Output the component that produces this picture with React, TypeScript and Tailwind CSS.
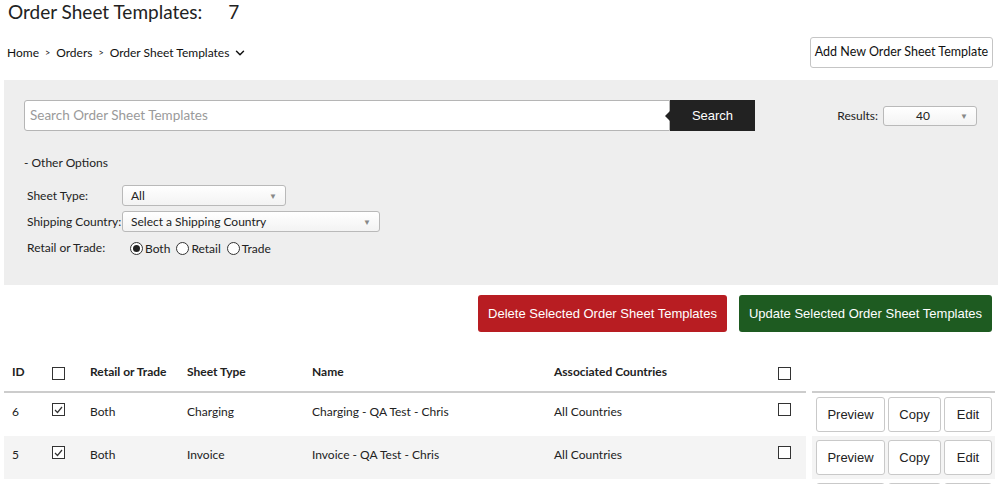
import React from "react";
import { ChevronDown } from "lucide-react";

const font = { fontFamily: "Lato, 'Open Sans', sans-serif" };
const btnFont = { fontFamily: "'Liberation Sans', Arial, sans-serif" };

const Check = ({ on }: { on?: boolean }) => (
  <span className="inline-flex w-[13px] h-[13px] border border-[#333] bg-white items-center justify-center">
    {on && (
      <svg width="9" height="8" viewBox="0 0 9 8">
        <path d="M1 4 L3.5 6.5 L8 1" stroke="#333" strokeWidth="1.2" fill="none" />
      </svg>
    )}
  </span>
);

const Radio = ({ on, label }: { on?: boolean; label: string }) => (
  <label className="flex items-center gap-[2px] mr-[6px]">
    <span className="w-[13px] h-[13px] rounded-full border border-[#333] bg-white flex items-center justify-center">
      {on && <span className="w-[7px] h-[7px] rounded-full bg-[#222]" />}
    </span>
    <span className="mt-[2px]">{label}</span>
  </label>
);

const Select = ({ value, w }: { value: string; w: string }) => (
  <div
    className={`${w} h-[21px] bg-gradient-to-b from-white to-[#f3f3f3] border border-[#b9b9b9] rounded-[3px] flex items-center justify-between pl-2 pr-2 text-[12px] text-[#222]`}
  >
    <span>{value}</span>
    <span className="text-[8px] text-[#888]">▼</span>
  </div>
);

const rows = [
  { id: "6", type: "Charging", name: "Charging - QA Test - Chris", alt: false },
  { id: "5", type: "Invoice", name: "Invoice - QA Test - Chris", alt: true },
];

const ActBtn = ({ label, w }: { label: string; w: string }) => (
  <button
    className={`${w} h-[35px] bg-white border border-[#c9c9c9] rounded-[3px] text-[13px] text-[#222]`}
    style={btnFont}
  >
    {label}
  </button>
);

export default function App() {
  return (
    <div className="w-[1002px] h-[484px] overflow-hidden bg-white text-[#222]" style={font}>
      <h1 className="pl-2 pt-0 text-[19px] leading-[24px] text-[#222]">
        Order Sheet Templates:<span className="ml-[26px]">7</span>
      </h1>

      <div className="flex items-center justify-between mt-[13px] pl-[7px] pr-[9px]">
        <div className="flex items-center text-[12px] text-[#111]">
          <span>Home</span>
          <span className="mx-[6px] text-[9px]">&gt;</span>
          <span>Orders</span>
          <span className="mx-[6px] text-[9px]">&gt;</span>
          <span>Order Sheet Templates</span>
          <ChevronDown size={14} strokeWidth={2.5} className="ml-[4px]" />
        </div>
        <button className="w-[183px] h-[31px] bg-white border border-[#c5c5c5] rounded-[3px] text-[12.5px] text-[#111] whitespace-nowrap">
          Add New Order Sheet Template
        </button>
      </div>

      <div className="mx-[4px] mt-[12px] h-[205px] bg-[#eeeeee] px-[20px] pt-[20px]">
        <div className="flex items-center">
          <div className="w-[646px] h-[31px] bg-white border border-[#b5b5b5] rounded-l-[3px] flex items-center pl-[5px] text-[13.5px] text-[#9a9a9a]">
            Search Order Sheet Templates
          </div>
          <div className="relative w-[85px] h-[31px] bg-[#222] text-white text-[13px] flex items-center justify-center" style={btnFont}>
            <span className="absolute left-[-5px] top-[11px] w-0 h-0 border-y-[5px] border-y-transparent border-r-[5px] border-r-[#222]" />
            Search
          </div>
          <div className="ml-auto mr-[1px] flex items-center text-[12px]">
            <span className="mr-[5px]">Results:</span>
            <div className="w-[94px] h-[20px] bg-gradient-to-b from-white to-[#f3f3f3] border border-[#b9b9b9] rounded-[3px] flex items-center justify-between pl-[32px] pr-2">
              <span>40</span>
              <span className="text-[8px] text-[#888]">▼</span>
            </div>
          </div>
        </div>

        <div className="mt-[23px] text-[12px]">- Other Options</div>

        <div className="mt-[13px] flex flex-col gap-[5px] text-[12px] pl-[3px]">
          <div className="flex items-center">
            <span className="w-[95px]">Sheet Type:</span>
            <Select value="All" w="w-[164px]" />
          </div>
          <div className="flex items-center">
            <span className="w-[95px]">Shipping Country:</span>
            <Select value="Select a Shipping Country" w="w-[258px]" />
          </div>
          <div className="flex items-center mt-[1px]">
            <span className="w-[103px]">Retail or Trade:</span>
            <Radio on label="Both" />
            <Radio label="Retail" />
            <Radio label="Trade" />
          </div>
        </div>
      </div>

      <div className="flex justify-end gap-[12px] pr-[10px] mt-[10px] text-[13px] text-white" style={btnFont}>
        <button className="w-[249px] h-[37px] bg-[#b81d22] rounded-[3px] whitespace-nowrap">Delete Selected Order Sheet Templates</button>
        <button className="w-[253px] h-[37px] bg-[#1e5b21] rounded-[3px] whitespace-nowrap">Update Selected Order Sheet Templates</button>
      </div>

      <div className="flex mt-[28px] text-[12px]">
        <div className="ml-[4px] w-[802px]">
          <div className="grid grid-cols-[40px_38px_97px_125px_242px_224px_1fr] items-center pl-[8px] h-[33px] border-b-2 border-[#ccc] font-bold pb-[8px]">
            <span>ID</span>
            <span className="flex pt-[3px]"><Check /></span>
            <span>Retail or Trade</span>
            <span>Sheet Type</span>
            <span>Name</span>
            <span>Associated Countries</span>
            <span className="flex pt-[3px]"><Check /></span>
          </div>
          {rows.map((r) => (
            <div
              key={r.id}
              className={`grid grid-cols-[40px_38px_97px_125px_242px_224px_1fr] items-start pl-[8px] h-[43px] pt-[10px] ${r.alt ? "bg-[#f4f4f4]" : ""}`}
            >
              <span>{r.id}</span>
              <span className="flex"><Check on /></span>
              <span>Both</span>
              <span>{r.type}</span>
              <span>{r.name}</span>
              <span>All Countries</span>
              <span className="flex"><Check /></span>
            </div>
          ))}
        </div>
        <div className="ml-[6px] w-[183px]">
          <div className="h-[33px] border-b-2 border-[#ccc]" />
          {rows.map((r) => (
            <div key={r.id} className={`h-[43px] flex gap-[3px] pl-[4px] pt-[4px] ${r.alt ? "bg-[#f4f4f4]" : ""}`}>
              <ActBtn label="Preview" w="w-[69px]" />
              <ActBtn label="Copy" w="w-[53px]" />
              <ActBtn label="Edit" w="w-[48px]" />
            </div>
          ))}
          <div className="h-[8px] flex gap-[3px] pl-[4px] pt-[4px]">
            <div className="w-[69px] border border-[#c9c9c9] rounded-t-[3px]" />
            <div className="w-[53px] border border-[#c9c9c9] rounded-t-[3px]" />
            <div className="w-[48px] border border-[#c9c9c9] rounded-t-[3px]" />
          </div>
        </div>
      </div>
    </div>
  );
}
